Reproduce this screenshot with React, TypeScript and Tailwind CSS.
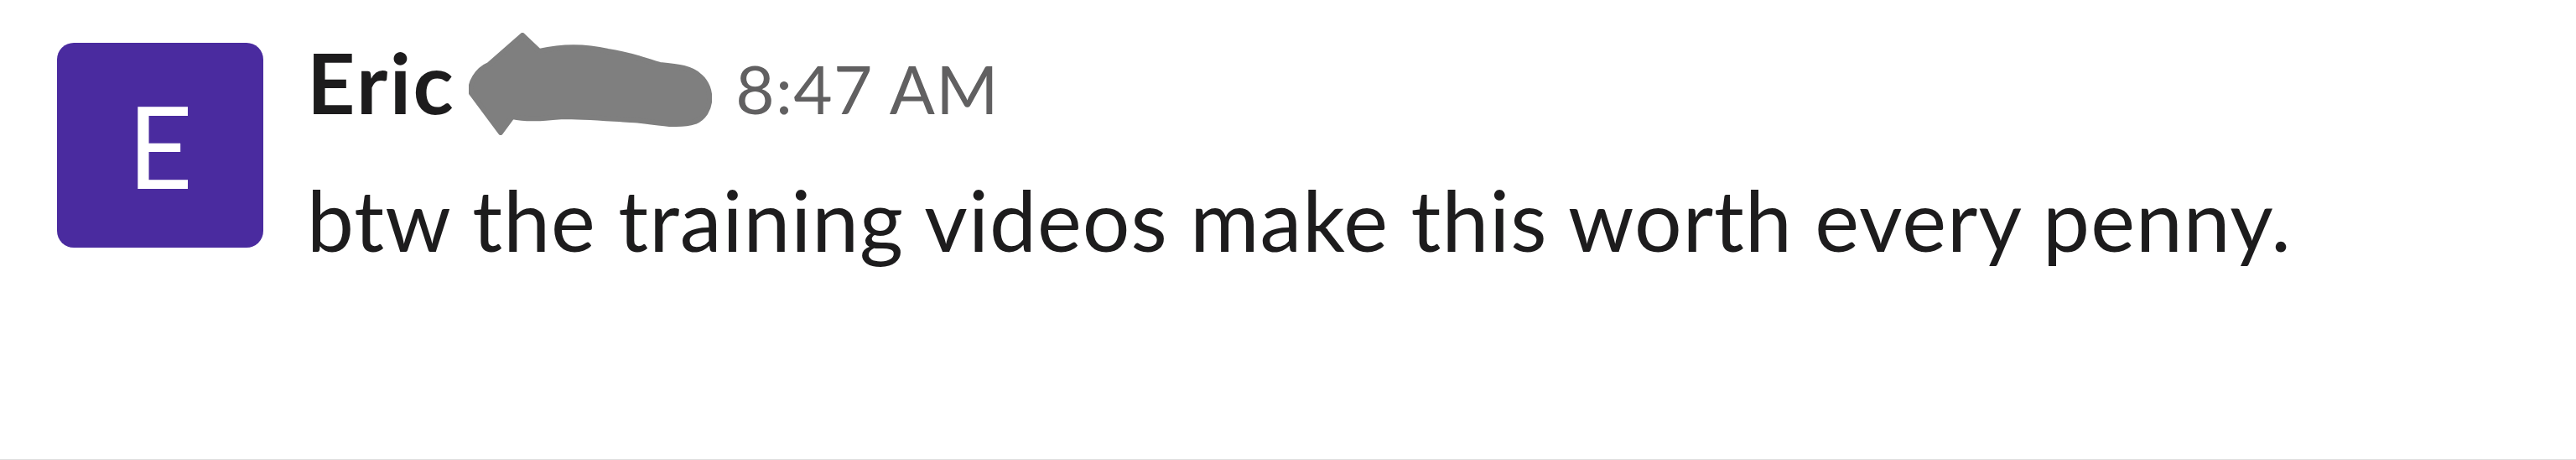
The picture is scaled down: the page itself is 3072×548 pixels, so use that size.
const message = {
  initial: "E",
  firstName: "Eric",
  time: "8:47 AM",
  text: "btw the training videos make this worth every penny.",
};

// gray marker scribble that hides the surname
function Scribble() {
  return (
    <svg
      className="block"
      width="290"
      height="122"
      viewBox="0 0 290 122"
      aria-hidden="true"
    >
      <path
        d="M64 3 L84 22 C110 16 140 16 166 22 C195 26 212 34 228 38 C250 40 266 42 276 52 C292 66 292 96 270 106 C245 114 215 104 192 104 C160 102 135 100 112 100 C90 102 70 104 52 100 L38 119 L3 72 C0 60 10 44 24 38 Z"
        fill="#7f7f7f"
        stroke="#7f7f7f"
        strokeWidth="6"
        strokeLinejoin="round"
      />
    </svg>
  );
}

export default function App() {
  return (
    <div className="w-full h-[548px] bg-white border-b border-[#dedede] font-['Lato',sans-serif] overflow-hidden">
      <div className="flex items-start pl-[68px] pt-[37px] gap-[52px]">
        {/* Avatar */}
        <div className="mt-[14px] w-[246px] h-[244px] shrink-0 rounded-[20px] bg-[#4a2b9f] flex items-center justify-center">
          <span className="text-white text-[135px] leading-none font-normal">
            {message.initial}
          </span>
        </div>

        {/* Message */}
        <div className="flex flex-col">
          <div className="flex items-baseline h-[120px]">
            <span className="text-[100px] leading-[120px] font-bold text-[#1d1c1d] tracking-[2.5px]">
              {message.firstName}
            </span>
            <span className="ml-[16px] self-start mt-[2px]">
              <Scribble />
            </span>
            <span className="ml-[28px] text-[80px] leading-[120px] font-normal text-[#616061] tracking-[1.3px]">
              {message.time}
            </span>
          </div>
          <p className="mt-[44px] text-[100px] leading-[120px] font-normal text-[#1d1c1d] tracking-[1px]">
            {message.text}
          </p>
        </div>
      </div>
    </div>
  );
}
